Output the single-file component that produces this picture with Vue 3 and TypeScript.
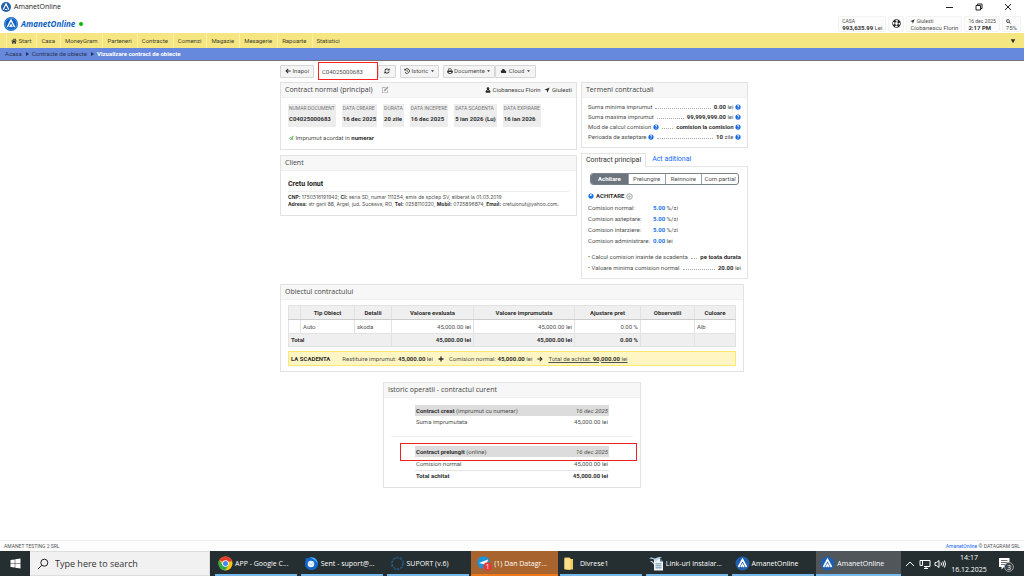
<script setup lang="ts">
import { ref } from 'vue'

interface Pair { label: string; value: string }
interface Term { label: string; help: boolean; value: string; unit: string }

const icons: Record<string, string> = {
  home: 'M8 1.5 0.5 8l1 1.2L8 3.6l6.500 5.600 1-1.200L13 5.600V2h-2v2zM8 5 3 9.300V15h3.600v-4h2.800v4H13V9.300z',
  left: 'M7.500 1.500 1 8l6.500 6.500 1.800-1.800L6 9.500h9v-3H6l3.300-3.200z',
  right: 'M8.500 1.500 15 8l-6.500 6.500-1.800-1.800L10 9.500H1v-3h9L6.700 3.300z',
  plus: 'M6.300 1.500h3.400v4.800h4.800v3.400H9.700v4.800H6.300V9.700H1.500V6.300h4.800z',
  refresh: 'M1.200 7a7 7 0 0 1 11.700-4L15 1v5.800H9.200l2-2A4.600 4.600 0 0 0 3.600 7zM14.800 9a7 7 0 0 1-11.700 4L1 15V9.200h5.800l-2 2A4.600 4.600 0 0 0 12.400 9z',
  history: 'M1 1v5.500h5.500L4.600 4.600a5 5 0 1 1-.6 6L2.200 11.700A7 7 0 1 0 3.100 3.100zM7.300 4.500v4.700h4V7.700H8.900V4.500z',
  print: 'M3.500 1h7l2 2v3h-1.500V3.500H5V6H3.500zM2 6.500h12a1.500 1.500 0 0 1 1.500 1.500v4.500h-3V15h-9v-2.500h-3V8A1.500 1.500 0 0 1 2 6.500zM5 10.500v3h6v-3z',
  cloud: 'M4 13.500a3.600 3.600 0 0 1-1-7A4.600 4.600 0 0 1 11.500 5 3.300 3.300 0 0 1 13 7.200a3.200 3.200 0 0 1 0 6.300z',
  edit: 'M2 2.500h8l-1.200 1.300H3.300v9h9V9l1.300-1.300V14H2zM13 1l2.200 2.200-6.700 6.700-2.900.8.700-3z',
  user: 'M8 1a3.500 3.500 0 0 1 3.500 3.800C11.500 7 10 9 8 9S4.500 7 4.500 4.800A3.500 3.500 0 0 1 8 1zM4.300 8.200A5 5 0 0 0 8 10a5 5 0 0 0 3.700-1.800c2 .5 2.800 2.500 2.800 5.300 0 1-.7 1.500-1.500 1.500H3c-.800 0-1.500-.5-1.500-1.500 0-2.800.8-4.800 2.800-5.300z',
  arrow: 'M15 1 9 15 7.500 8.500 1 7z',
  plane: 'M15 1 12.500 14 8.300 12.200 6 15v-4L13 4 4.500 10.300 1 9z',
  help: 'M8 1a7 7 0 1 1 0 14A7 7 0 0 1 8 1zM5 6.300h2c0-1.500 2.300-1.300 2 .1-.2.900-2 1.200-2 3.200h2c0-1.200 2.100-1.500 2.100-3.600C11 2.500 5 2.500 5 6.300zM7 10.700v2h2v-2z',
  search: 'M6.500 1a5.500 5.500 0 0 1 4.600 8.500L15 13.400 13.400 15 9.500 11.100A5.500 5.500 0 1 1 6.500 1zm0 2.200a3.300 3.300 0 1 0 0 6.600 3.300 3.300 0 0 0 0-6.600z',
  caret: 'M2 5h12l-6 7z',
}

const nav = ['Casa', 'MoneyGram', 'Parteneri', 'Contracte', 'Comenzi', 'Magazie', 'Mesagerie', 'Rapoarte', 'Statistici']
const contractNo = ref('C04025000683')
const query = ref('')

const facts: Pair[] = [
  { label: 'NUMAR DOCUMENT', value: 'C04025000683' },
  { label: 'DATA CREARE', value: '16 dec 2025' },
  { label: 'DURATA', value: '20 zile' },
  { label: 'DATA INCEPERE', value: '16 dec 2025' },
  { label: 'DATA SCADENTA', value: '5 ian 2026 (Lu)' },
  { label: 'DATA EXPIRARE', value: '16 ian 2026' },
]
const terms: Term[] = [
  { label: 'Suma minima imprumut', help: false, value: '0.00', unit: ' lei' },
  { label: 'Suma maxima imprumut', help: false, value: '99,999,999.00', unit: ' lei' },
  { label: 'Mod de calcul comision', help: true, value: 'comision la comision', unit: '' },
  { label: 'Perioada de asteptare', help: true, value: '10', unit: ' zile' },
]
const modes = ['Achitare', 'Prelungire', 'Reinnoire', 'Com.partial']
const mode = ref('Achitare')
const fees = [
  { label: 'Comision normal:', value: '5.00', unit: '%/zi' },
  { label: 'Comision asteptare:', value: '5.00', unit: '%/zi' },
  { label: 'Comision intarziere:', value: '5.00', unit: '%/zi' },
  { label: 'Comision administrare:', value: '0.00', unit: 'lei' },
]
const heads = ['Tip Obiect', 'Detalii', 'Valoare evaluata', 'Valoare imprumutata', 'Ajustare pret', 'Observatii', 'Culoare']
const tasks = [
  { icon: 'chrome', text: 'APP - Google C...', state: '' },
  { icon: 'mail', text: 'Sent - suport@...', state: '' },
  { icon: 'gear', text: 'SUPORT (v.6)', state: '' },
  { icon: 'chat', text: '(1) Dan Datagr...', state: 'alert' },
  { icon: 'folder', text: 'Divrese1', state: '' },
  { icon: 'doc', text: 'Link-uri instalar...', state: '' },
  { icon: 'amanet', text: 'AmanetOnline', state: '' },
  { icon: 'amanet', text: 'AmanetOnline', state: 'active' },
]
</script>

<template>
  <div class="screen">
    <div class="titlebar">
      <svg class="mark" viewBox="0 0 16 16"><circle cx="8" cy="8" r="8" fill="#1f5fae" /><path d="M3.500 12 8 3l4.500 9M6 12h4" fill="none" stroke="#fff" stroke-width="1.800" /></svg>
      <span class="wintitle">AmanetOnline</span>
      <button class="win" aria-label="Minimize"><svg viewBox="0 0 10 10"><path d="M1 5.500h7" /></svg></button>
      <button class="win" aria-label="Restore"><svg viewBox="0 0 10 10"><path d="M2 3.500h4.500V8H2zM3.500 3.500V2H8v4.500H6.500" /></svg></button>
      <button class="win" aria-label="Close"><svg viewBox="0 0 10 10"><path d="M2 2l6 6M8 2 2 8" /></svg></button>
    </div>

    <header class="top">
      <svg class="logo" viewBox="0 0 16 16"><circle cx="8" cy="8" r="8" fill="#0b62c4" /><circle cx="8" cy="8" r="6.800" fill="none" stroke="#8fbdf0" stroke-width=".6" /><path d="M3.800 11.500 8 3.500l4.200 8M6.500 11.500 8 9l1.500 2.500" fill="none" stroke="#fff" stroke-width="1.600" /></svg>
      <a href="#" class="brand">AmanetOnline</a>
      <span class="dot"></span>
      <div class="cards">
        <div class="card casa"><div class="small">CASA</div><div><b>993,635.99</b> Lei</div></div>
        <button class="card help" aria-label="Ajutor">
          <svg viewBox="0 0 16 16"><circle cx="8" cy="8" r="5" fill="none" stroke="#222" stroke-width="5" /><circle cx="8" cy="8" r="5" fill="none" stroke="#fff" stroke-width="2.600" stroke-dasharray="4 3.854" stroke-dashoffset="2" /></svg>
        </button>
        <div class="card"><div class="small"><svg class="ic" viewBox="0 0 16 16"><path :d="icons.arrow" /></svg> Giulesti</div><div>Ciobanescu Florin</div></div>
        <div class="card"><div class="small">16 dec 2025</div><div><b>2:17 PM</b></div></div>
        <div class="card"><div class="small"><svg class="ic" viewBox="0 0 16 16"><path fill-rule="evenodd" :d="icons.search" /></svg></div><div>75%</div></div>
      </div>
    </header>

    <nav class="menu">
      <a href="#" class="item"><svg class="ic" viewBox="0 0 16 16"><path :d="icons.home" /></svg> Start</a>
      <a v-for="n in nav" :key="n" href="#" class="item">{{ n }}</a>
      <button class="more" aria-label="Mai mult"><svg class="ic" viewBox="0 0 16 16"><path d="M2 3h12L8 14z" /></svg></button>
    </nav>
    <div class="crumbs">
      <a href="#">Acasa</a><i></i><a href="#">Contracte de obiecte</a><i></i><b>Vizualizare contract de obiecte</b>
    </div>

    <main class="page">
      <div class="toolbar">
        <button class="btn"><svg class="ic" viewBox="0 0 16 16"><path :d="icons.left" /></svg> Inapoi</button>
        <div class="marked"><input v-model="contractNo" class="number" aria-label="Numar contract" /></div>
        <button class="btn reload" aria-label="Reincarca"><svg class="ic" viewBox="0 0 16 16"><path :d="icons.refresh" /></svg></button>
        <button class="btn menu-btn hist"><svg class="ic" viewBox="0 0 16 16"><path :d="icons.history" /></svg> Istoric <svg class="caret" viewBox="0 0 16 16"><path :d="icons.caret" /></svg></button>
        <div class="group">
          <button class="btn menu-btn"><svg class="ic" viewBox="0 0 16 16"><path fill-rule="evenodd" :d="icons.print" /></svg> Documente <svg class="caret" viewBox="0 0 16 16"><path :d="icons.caret" /></svg></button>
          <button class="btn"><svg class="ic wide" viewBox="0 0 16 16"><path :d="icons.cloud" /></svg> Cloud <svg class="caret" viewBox="0 0 16 16"><path :d="icons.caret" /></svg></button>
        </div>
      </div>

      <div class="columns">
        <div class="left">
          <section class="panel">
            <h2>Contract normal (principal) <svg class="edit" viewBox="0 0 16 16"><path fill-rule="evenodd" :d="icons.edit" /></svg>
              <span class="who"><svg class="ic" viewBox="0 0 16 16"><path :d="icons.user" /></svg> Ciobanescu Florin</span>
              <span class="where"><svg class="ic" viewBox="0 0 16 16"><path :d="icons.arrow" /></svg> Giulesti</span>
            </h2>
            <div class="body contract">
              <dl class="facts">
                <div v-for="f in facts" :key="f.label"><dt>{{ f.label }}</dt><dd>{{ f.value }}</dd></div>
              </dl>
              <p class="loan"><svg class="ic green" viewBox="0 0 16 16"><path :d="icons.plane" /></svg> Imprumut acordat in <b>numerar</b></p>
            </div>
          </section>
          <section class="panel">
            <h2>Client</h2>
            <div class="body client">
              <h3>Cretu Ionut</h3>
              <p><b>CNP:</b> 1750316191942; <b>CI:</b> seria SD, numar 111254, emis de spclep SV, eliberat la 01.03.2019</p>
              <p><b>Adresa:</b> str garii 88, Argel, jud. Suceava, RO, <b>Tel:</b> 0258110220, <b>Mobil:</b> 0725896874, <b>Email:</b> cretuionut@yahoo.com.</p>
            </div>
          </section>
        </div>

        <div class="right">
          <section class="panel">
            <h2>Termeni contractuali</h2>
            <div class="body terms">
              <div v-for="t in terms" :key="t.label" class="lead">
                <span>{{ t.label }} <svg v-if="t.help" class="q" viewBox="0 0 16 16"><path fill-rule="evenodd" :d="icons.help" /></svg></span>
                <i></i>
                <span><b>{{ t.value }}</b>{{ t.unit }} <svg class="q" viewBox="0 0 16 16"><path fill-rule="evenodd" :d="icons.help" /></svg></span>
              </div>
            </div>
          </section>
          <section class="tabbed">
            <div class="tabs"><button class="tab on">Contract principal</button><button class="tab">Act aditional</button></div>
            <div class="tabbody">
              <div class="segments">
                <button v-for="m in modes" :key="m" :class="{ on: m === mode }" @click="mode = m">{{ m }}</button>
              </div>
              <h4>
                <svg viewBox="0 0 16 16"><circle cx="8" cy="8" r="7" fill="#1a73e8" /><path d="M5 4l4-1 2 2-3 3-3-1z" fill="#fff" /></svg>
                ACHITARE
                <svg class="big" viewBox="0 0 16 16"><circle cx="8" cy="8" r="6.500" fill="#eee" stroke="#888" stroke-width="1.500" /><path d="M8 5v6M5 8h6" stroke="#999" stroke-width="1.200" /></svg>
              </h4>
              <dl class="fees">
                <template v-for="f in fees" :key="f.label"><dt>{{ f.label }}</dt><dd><a href="#">{{ f.value }}</a> {{ f.unit }}</dd></template>
              </dl>
              <div class="lead"><span>• Calcul comision inainte de scadenta</span><i></i><b>pe toata durata</b></div>
              <div class="lead"><span>• Valoare minima comision normal</span><i></i><span><b>20.00</b> lei</span></div>
            </div>
          </section>
        </div>
      </div>

      <section class="panel objects">
        <h2>Obiectul contractului</h2>
        <div class="body">
          <table>
            <colgroup><col class="c0" /><col class="c1" /><col class="c2" /><col class="c3" /><col class="c4" /><col class="c5" /><col class="c6" /><col class="c7" /></colgroup>
            <thead><tr><th></th><th v-for="h in heads" :key="h">{{ h }}</th></tr></thead>
            <tbody>
              <tr><td></td><td>Auto</td><td>skoda</td><td class="num">45,000.00 lei</td><td class="num">45,000.00 lei</td><td class="num">0.00 %</td><td></td><td>Alb</td></tr>
            </tbody>
            <tfoot>
              <tr><td colspan="3">Total</td><td class="num">45,000.00 lei</td><td class="num">45,000.00 lei</td><td class="num">0.00 %</td><td></td><td></td></tr>
            </tfoot>
          </table>
          <div class="due">
            <b class="cap">LA SCADENTA</b>
            <span>Restituire imprumut: <b>45,000.00</b> lei</span>
            <svg class="ic" viewBox="0 0 16 16"><path :d="icons.plus" /></svg>
            <span>Comision normal: <b>45,000.00</b> lei</span>
            <svg class="ic" viewBox="0 0 16 16"><path :d="icons.right" /></svg>
            <u>Total de achitat: <b>90,000.00</b> lei</u>
          </div>
        </div>
      </section>

      <section class="panel history">
        <h2>Istoric operatii - contractul curent</h2>
        <div class="body">
          <div class="op">
            <div class="row head"><span><b>Contract creat</b> (imprumut cu numerar)</span><em>16 dec 2025</em></div>
            <div class="row"><span>Suma imprumutata</span><span>45,000.00 lei</span></div>
          </div>
          <hr />
          <div class="op second">
            <div class="row head"><span><b>Contract prelungit</b> (online)</span><em>16 dec 2025</em></div>
            <div class="row"><span>Comision normal</span><span>45,000.00 lei</span></div>
            <div class="row sum"><b>Total achitat</b><b>45,000.00 lei</b></div>
          </div>
        </div>
      </section>
    </main>

    <footer class="foot"><span>AMANET TESTING 2 SRL</span><span><a href="#">AmanetOnline</a> © DATAGRAM SRL</span></footer>

    <div class="taskbar">
      <button class="start" aria-label="Start"><svg viewBox="0 0 22 22"><path d="M1 4l8.500-1.200v7.700H1zM10.500 2.600 21 1v9.500H10.500zM1 11.500h8.500v7.700L1 18zM10.500 11.500H21V21l-10.500-1.600z" fill="#fff" /></svg></button>
      <label class="find">
        <svg viewBox="0 0 12 12"><circle cx="7.300" cy="4.700" r="3.500" /><path d="M4.800 7.200 1 11" /></svg>
        <input v-model="query" placeholder="Type here to search" aria-label="Search" />
      </label>
      <div class="tasks">
        <button v-for="(t, i) in tasks" :key="i" class="task" :class="t.state">
          <svg v-if="t.icon === 'chrome'" viewBox="0 0 30 30"><circle cx="15" cy="15" r="14" fill="#fbc116" /><path d="M15 15 2.900 8A14 14 0 0 1 27.100 8z" fill="#e33b2e" /><path d="M3 8a14 14 0 0 0 11 21l7-10.500-6 2-6-2z" fill="#2da94f" /><path d="M8 8h19.100l1 3H14z" fill="#e33b2e" /><circle cx="15" cy="15" r="6.500" fill="#fff" /><circle cx="15" cy="15" r="5" fill="#4285f4" /></svg>
          <svg v-else-if="t.icon === 'mail'" viewBox="0 0 30 30"><path d="M3 3c3 3 5 0 11 0 9 0 14 6 14 13s-6 12-13 12S1 23 2 15c0-5 2-6 1-12z" fill="#1467c8" /><path d="M12 3c10-2 16 6 15 13-2-6-6-9-15-13z" fill="#3db0f7" /><circle cx="14" cy="16" r="6.500" fill="#e8f2fd" /><path d="M9 13l5 5 6-5" fill="none" stroke="#a8c8ea" stroke-width="1.500" /></svg>
          <svg v-else-if="t.icon === 'gear'" viewBox="0 0 30 30"><circle cx="15" cy="15" r="11" fill="none" stroke="#2a6ea6" stroke-width="2" stroke-dasharray="5 2" /><circle cx="15" cy="15" r="13" fill="none" stroke="#1f5f95" stroke-width="2" stroke-dasharray="3 5.200" /></svg>
          <svg v-else-if="t.icon === 'chat'" viewBox="0 0 30 30"><circle cx="13" cy="13" r="12.500" fill="#1c93d6" /><path d="M4 14 22 7l-3 11-7-2z" fill="#fff" /><circle cx="21" cy="21" r="8.500" fill="#e53a35" /><text x="21" y="26" text-anchor="middle" font-size="13" fill="#fff">1</text></svg>
          <svg v-else-if="t.icon === 'folder'" viewBox="0 0 30 30"><path d="M3 3h10l2 3h5v21H3z" fill="#f2c85a" /><path d="M3 5l12 0v23L3 26z" fill="#ffe08a" /></svg>
          <svg v-else-if="t.icon === 'doc'" viewBox="0 0 30 30"><path d="M10 5h12l6 6v18H10z" fill="#eef4f8" /><path d="M22 5v6h6zM13 15h12v1.500H13zM13 19h12v1.500H13zM13 23h12v1.500H13z" fill="#3d6d90" /><path d="M0 5c5-4 9-2 12 2 4-5 9-6 14-4-6 1-9 4-12 9-2-5-7-7-14-7zM2 11c4-2 6 0 8 3v4c-2-4-4-6-8-7z" fill="#b9d3e6" /></svg>
          <svg v-else viewBox="0 0 30 30"><circle cx="15" cy="15" r="14" fill="#1f5fae" /><path d="M7 22 15 7l8 15M12 22l3-5 3 5" fill="none" stroke="#fff" stroke-width="3.200" /></svg>
          <span>{{ t.text }}</span>
        </button>
      </div>
      <div class="tray">
        <svg viewBox="0 0 12 12"><path d="M2 8l4-4 4 4" /></svg>
        <svg viewBox="0 0 12 12"><path d="M3 2.500h8v6H5M1 2.500v5h2.500v-5zM5 10.500h4M7 8.500v2" /></svg>
        <svg viewBox="0 0 12 12"><path d="M1 4.500h1.500L5 2.500v7L2.500 7.500H1zM7 4.500q1 1.500 0 3M8.800 3.500q1.600 2.500 0 5M10.500 2.500q2 3.500 0 7" /></svg>
      </div>
      <div class="clock"><div>14:17</div><div>16.12.2025</div></div>
      <button class="note" aria-label="Notifications"><svg viewBox="0 0 16 16"><path d="M1 2h10.500v9H6l-2.500 2.500V11H1z" fill="#fff" /><path d="M3 4.500h6.500M3 6.500h6.500M3 8.500h4" stroke="#555" stroke-width=".8" /><circle cx="11" cy="11" r="4.500" fill="#3b4347" stroke="#a9aeb0" stroke-width=".8" /><text x="11" y="13.500" text-anchor="middle" font-size="7" fill="#fff">3</text></svg></button>
    </div>
  </div>
</template>

<style>
body { margin: 0; background: #fff; }
</style>

<style scoped>
* { box-sizing: border-box; }
.screen { min-height: 100vh; display: flex; flex-direction: column; font-family: Roboto, sans-serif; font-size: 6px; line-height: 8px; color: #505050; }
button, input { font: inherit; color: inherit; margin: 0; padding: 0; border: 0; background: none; }
a { color: inherit; text-decoration: none; }
h2, h3, h4, p, dl, dd { margin: 0; }
b { font-weight: 700; color: #303030; }
.ic { width: 6px; height: 6px; fill: #2c2c2c; vertical-align: -1px; }
.caret { width: 5px; height: 4px; fill: #333; vertical-align: 0; }
.q { width: 6px; height: 6px; fill: #1768e0; vertical-align: -1px; }

.titlebar { display: flex; align-items: center; height: 14px; padding-left: 1px; font-family: "Open Sans", sans-serif; font-size: 7px; color: #222; }
.mark { width: 10px; height: 10px; margin-right: 3px; }
.wintitle { flex: 1; }
.win { width: 29px; height: 14px; display: flex; align-items: center; justify-content: center; }
.win:last-child { margin-right: 2px; }
.win svg { width: 10px; height: 10px; fill: none; stroke: #222; stroke-width: 1; }

.top { display: flex; align-items: center; height: 19px; padding: 0 3px 0 4px; }
.logo { width: 14px; height: 14px; }
.brand { margin-left: 3px; font: italic 700 8px/12px "Open Sans", sans-serif; color: #0b62c4; }
.dot { width: 4px; height: 4px; margin-left: 4px; border-radius: 50%; background: #0cb40c; }
.cards { display: flex; gap: 2px; margin-left: auto; }
.card { height: 16px; padding: 1px 3px; line-height: 7px; border: 1px solid #f3f3f3; border-radius: 2px; background: #fcfcfc; white-space: nowrap; }
.small { font-size: 5px; line-height: 6px; height: 6px; }
.small .ic { width: 5px; height: 5px; }
.help { width: 16px; display: flex; align-items: center; justify-content: center; }
.help svg { width: 9px; height: 9px; flex: none; }

.menu { display: flex; height: 15px; padding-left: 6px; background: #f5e682; color: #45422c; line-height: 15px; }
.item { padding: 0 5px 0 4px; border-left: 1px solid #fbf0ad; }
.more { margin: 0 8px 0 auto; }
.crumbs { display: flex; align-items: center; height: 13px; padding: 0 5px; border-bottom: 1px solid #77717c; background: #6688dd; color: #2b3554; }
.crumbs i { margin: 0 3px 0 4px; border-left: 3px solid #26304f; border-top: 2px solid transparent; border-bottom: 2px solid transparent; }
.crumbs b { color: #fff; }

.page { flex: 1; width: 100%; max-width: 464px; margin: 0 auto; }
.toolbar { display: flex; align-items: center; height: 18px; margin: 1px 0 2px; }
.btn { height: 13px; padding: 0 4px; border: 1px solid #d6d6d6; border-radius: 1px; background: #f4f4f4; white-space: nowrap; }
.menu-btn { padding: 0 3px; }
.marked { width: 60px; height: 18px; margin-left: 4px; padding: 1px 0; border: 1px solid #f22; }
.number { display: block; width: 100%; height: 14px; padding: 0 3px; }
.reload { padding: 0 5px; }
.hist { margin-left: 4px; }
.group { display: flex; margin-left: 4px; }
.wide { width: 7px; }

.columns { display: grid; grid-template-columns: minmax(0, 297fr) minmax(0, 167fr); gap: 4px; margin-right: -4px; }
.panel { border: 1px solid #e2e2e2; background: #fff; }
.panel h2 { display: flex; align-items: center; height: 15px; padding: 0 4px; border-bottom: 1px solid #f0f0f0; background: #f7f7f7; font: 400 7px/14px "Open Sans", sans-serif; color: #444; white-space: nowrap; }
.edit { width: 8px; height: 8px; margin-left: 8px; fill: #a2a2a2; }
.who, .where { font: 400 6px/8px Roboto, sans-serif; }
.who { margin-left: auto; }
.where { margin-left: 4px; }
.left .panel + .panel { margin-top: 5px; }
.contract { height: 51px; padding: 6px 7px; }
.facts { display: flex; gap: 6px; }
.facts > div { height: 23px; padding: 1px 1px 0; background: #ededed; white-space: nowrap; }
.facts dt { font-size: 5px; line-height: 7px; color: #777; }
.facts dd { margin-top: 2px; font-weight: 700; line-height: 9px; color: #303030; }
.loan { margin-top: 7px; }
.green { fill: #6fbf73; }
.client { padding: 8px 7px 7px; line-height: 7px; white-space: nowrap; }
.client p { font-family: Inter, sans-serif; font-size: 5px; }
.client h3 { margin-bottom: 2px; padding-bottom: 2px; border-bottom: 1px solid #eee; font-size: 7px; line-height: 10px; color: #222; }

.terms { padding: 4px 6px 5px; }
.lead { display: flex; align-items: baseline; gap: 3px; line-height: 10px; white-space: nowrap; }
.lead i { flex: 1; border-bottom: 1px dotted #aaa; }
.tabbed { margin-top: 5px; }
.tabs { display: flex; height: 13px; }
.tab { padding: 0 6px; font-size: 7px; line-height: 11px; color: #1768ff; }
.tab.on { margin-bottom: -1px; padding: 0 4px; border: 1px solid #e4e4e4; border-bottom: 0; background: #fff; color: #333; }
.tabbody { padding: 6px 6px 5px; border: 1px solid #e4e4e4; }
.segments { display: grid; grid-template-columns: repeat(4, 1fr); height: 12px; margin: 0 2px; border: 1px solid #7a828a; border-radius: 3px; overflow: hidden; }
.segments button + button { border-left: 1px solid #9aa0a6; }
.segments button { line-height: 10px; white-space: nowrap; }
.segments .on { background: #6c757d; color: #fff; font-weight: 700; }
h4 { display: flex; align-items: center; gap: 2px; margin: 6px 0 1px; font-size: 6px; line-height: 10px; color: #303030; }
h4 svg { width: 6px; height: 6px; }
h4 .big { width: 7px; height: 7px; }
.fees { display: grid; grid-template-columns: 65px 1fr; margin-bottom: 5px; line-height: 11px; }
.fees a { color: #1a74f0; font-weight: 700; }
.tabbody .lead { line-height: 11px; }

.objects { margin-top: 5px; }
.objects .body { padding: 5px 7px; }
table { width: 100%; table-layout: fixed; border-collapse: collapse; border: 1px solid #ccc; }
th, td { height: 14px; padding: 0 2px; border: 1px solid #e2e2e2; text-align: left; white-space: nowrap; }
th { background: #efefef; text-align: center; color: #303030; border-bottom-color: #ccc; }
tfoot td { height: 13px; background: #efefef; font-weight: 700; color: #303030; border-top-color: #ccc; }
.num { text-align: right; }
.c0 { width: 12px; } .c1 { width: 54px; } .c2 { width: 37px; } .c3 { width: 82px; } .c4 { width: 101px; } .c5 { width: 66px; } .c6 { width: 54px; } .c7 { width: auto; }
.due { display: flex; align-items: center; gap: 5px; height: 15px; margin-top: 4px; padding: 0 2px; border: 1px solid #fce96a; background: #fff6c4; white-space: nowrap; }
.cap { margin-right: 7px; }

.history { width: 258px; max-width: 100%; margin: 10px auto 0; }
.history .body { padding: 7px 7px 6px; }
.op { margin: 0 24px; }
.row { display: flex; justify-content: space-between; height: 12px; padding: 0 1px; line-height: 11px; }
.row.head { height: 11px; background: #dcdcdc; }
hr { margin: 8px 0 9px; border: 0; border-top: 1px solid #eee; }
.second { position: relative; }
.second .head { margin-bottom: 1px; }
.second::before { content: ""; position: absolute; left: -15px; right: -28px; top: -3px; height: 16px; border: 1px solid #e22; }
.sum { height: 11px; border-top: 1px solid #e4e4e4; line-height: 10px; }

.foot { display: flex; justify-content: space-between; height: 11px; padding: 0 4px; border-top: 1px solid #eee; background: #fdfdfd; font-size: 5px; line-height: 11px; color: #555; }
.foot a { color: #1768ff; }

.taskbar { display: flex; align-items: stretch; height: 25px; background: #252e31; color: #fff; font-family: "Open Sans", sans-serif; font-size: 7px; line-height: 11px; }
.start { width: 30px; display: flex; align-items: center; justify-content: center; }
.start svg { width: 11px; height: 11px; }
.find { display: flex; align-items: center; width: 180px; padding-left: 7px; background: #f1f1f1; border: 1px solid #ddd; border-left: 0; }
.find svg { width: 12px; height: 12px; margin-right: 6px; fill: none; stroke: #222; }
.find input { flex: 1; min-width: 0; font-size: 9px; color: #333; }
.find input::placeholder { color: #333; opacity: 1; }
.tasks { flex: 1; display: flex; gap: 1px; max-width: 687px; margin-left: 4px; }
.task { flex: 1; min-width: 0; display: flex; align-items: center; gap: 2px; padding: 0 0 0 4px; background: linear-gradient(#76b9ed, #76b9ed) 1px bottom / 82px 2px no-repeat; text-align: left; white-space: nowrap; }
.task svg { width: 15px; height: 15px; flex: none; }
.task.alert { background: linear-gradient(#a8642f 0 23px, #f07818 23px); padding-left: 6px; }
.task.active { background: linear-gradient(#50565a 0 23px, #76b9ed 23px); }
.tray { display: flex; align-items: center; gap: 3px; margin-left: 3px; }
.tray svg { width: 12px; height: 12px; fill: none; stroke: #fff; stroke-width: 1; }
.clock { width: 40px; margin-left: 3px; padding-top: 1px; text-align: center; line-height: 12px; }
.note { width: 24px; margin-left: auto; margin-right: 6px; display: flex; align-items: center; justify-content: center; }
.note svg { width: 16px; height: 16px; }
</style>
